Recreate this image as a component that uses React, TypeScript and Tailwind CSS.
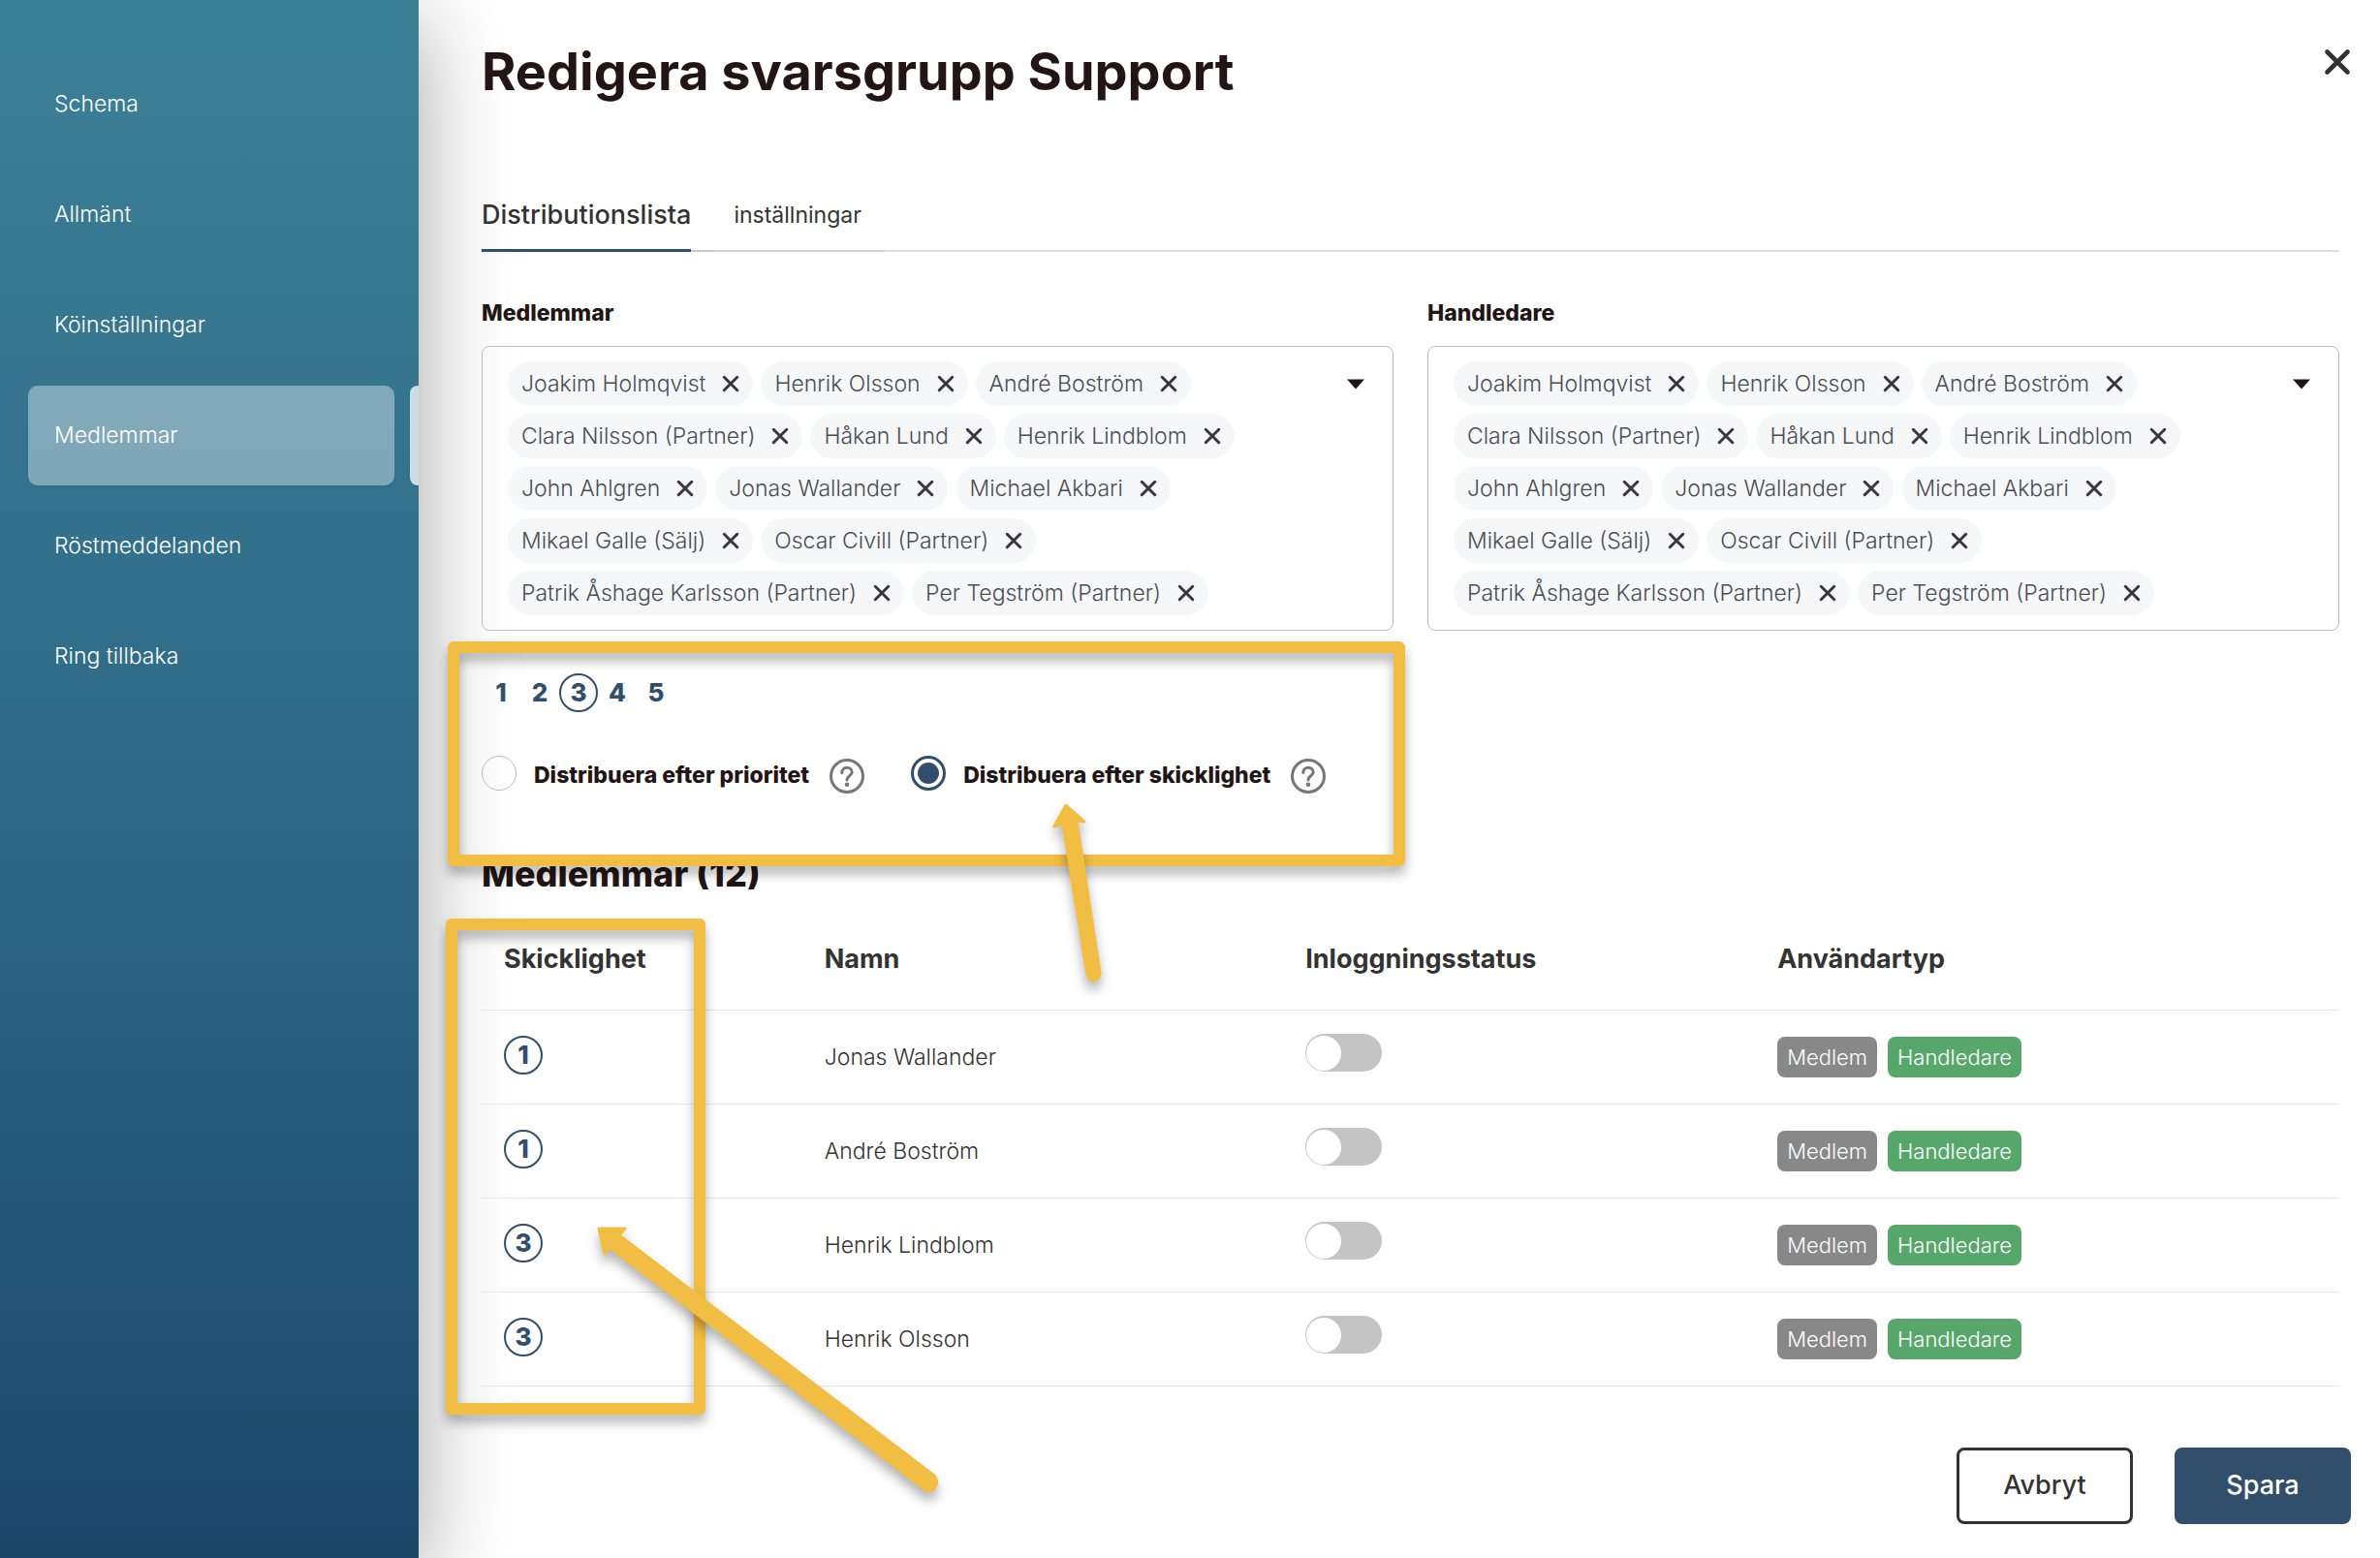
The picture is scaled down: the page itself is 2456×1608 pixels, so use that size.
import { useState } from "react";

const navItems = ["Schema", "Allmänt", "Köinställningar", "Medlemmar", "Röstmeddelanden", "Ring tillbaka"];

const people = [
  "Joakim Holmqvist",
  "Henrik Olsson",
  "André Boström",
  "Clara Nilsson (Partner)",
  "Håkan Lund",
  "Henrik Lindblom",
  "John Ahlgren",
  "Jonas Wallander",
  "Michael Akbari",
  "Mikael Galle (Sälj)",
  "Oscar Civill (Partner)",
  "Patrik Åshage Karlsson (Partner)",
  "Per Tegström (Partner)",
];

const rows = [
  { skill: 1, name: "Jonas Wallander" },
  { skill: 1, name: "André Boström" },
  { skill: 3, name: "Henrik Lindblom" },
  { skill: 3, name: "Henrik Olsson" },
];

function Cross({ className, width }: { className: string; width: number }) {
  return (
    <svg viewBox="0 0 24 24" className={className} fill="none" stroke="currentColor" strokeWidth={width} strokeLinecap="round" aria-hidden="true">
      <path d="M3 3 L21 21 M21 3 L3 21" />
    </svg>
  );
}

function Help({ label }: { label: string }) {
  return (
    <button type="button" aria-label={label} className="mt-1.5 size-9 text-[#777777]">
      <svg viewBox="0 0 36 36" className="size-9" fill="none" stroke="currentColor" strokeWidth="3" aria-hidden="true">
        <circle cx="18" cy="18" r="16.5" />
        <path d="M12.800 14.500 C12.800 7.500 23.200 7.500 23.200 14 C23.200 17.500 18 17.500 18 22" strokeLinecap="round" />
        <circle cx="18" cy="26.800" r="2.300" fill="currentColor" stroke="none" />
      </svg>
    </button>
  );
}

function PeoplePicker({ title }: { title: string }) {
  return (
    <section className="min-w-0 flex-1">
      <h3 className="text-[23px] leading-8 font-extrabold text-[#231515]">{title}</h3>
      <div className="mt-[18px] flex items-start justify-between rounded-lg border border-[#bfbfbf] py-[15px] pr-7 pl-[26px]">
        <ul className="flex max-w-[800px] flex-wrap gap-2">
          {people.map((p) => (
            <li key={p} className="flex h-[46px] items-center gap-[17px] rounded-full bg-[#f5f7f9] px-[14px] text-[23px] font-light whitespace-nowrap text-[#4a4e55]">
              {p}
              <button type="button" aria-label={`Ta bort ${p}`} className="text-[#3c3638]">
                <Cross className="size-[18px]" width={4} />
              </button>
            </li>
          ))}
        </ul>
        <button type="button" aria-label={`Öppna ${title}`} className="mt-[18px]">
          <svg viewBox="0 0 20 11" className="h-[11px] w-5" aria-hidden="true">
            <path d="M1 0.500 H19 L10 10.500 Z" fill="#231515" />
          </svg>
        </button>
      </div>
    </section>
  );
}

function Radio({ id, label, checked, onChange }: { id: string; label: string; checked: boolean; onChange: () => void }) {
  return (
    <div className="flex items-center">
      <input
        id={id}
        type="radio"
        name="distribution"
        checked={checked}
        onChange={onChange}
        className="size-9 appearance-none rounded-full border border-[#bcbcbc] bg-clip-content checked:border-[3px] checked:border-[#314f6b] checked:bg-[#314f6b] checked:p-1"
      />
      <label htmlFor={id} className="mt-1 pr-[21px] pl-[18px] text-[23px] leading-8 font-extrabold text-[#231515]">
        {label}
      </label>
      <Help label={`Hjälp: ${label}`} />
    </div>
  );
}

export default function App() {
  const [level, setLevel] = useState(3);
  const [mode, setMode] = useState("skill");
  return (
    <div className="relative flex min-h-screen overflow-hidden bg-white font-['Inter',sans-serif] text-[#333333]">
      <aside className="w-[432px] shrink-0 bg-linear-to-b from-[#3c8096] via-[#2e6a87] to-[#1c4868] pt-14 shadow-[0_24px_90px_rgba(0,0,0,0.36)]">
        <nav className="flex flex-col gap-[11px]">
          {navItems.map((n) =>
            n === "Medlemmar" ? (
              <div key={n} className="flex justify-between pl-[29px]">
                <a href="#" aria-current="page" className="flex h-[103px] w-[378px] items-center rounded-[10px] bg-white/38 pl-[27px] text-[23px] font-light text-white">
                  {n}
                </a>
                <span className="w-[9px] rounded-l-lg bg-[#cddde4]" />
              </div>
            ) : (
              <a key={n} href="#" className="flex h-[103px] items-center pl-14 text-[23px] font-light text-white">
                {n}
              </a>
            ),
          )}
        </nav>
      </aside>

      <main className="relative z-10 flex min-w-0 flex-1 flex-col pr-[30px] pb-[35px] pl-[65px]">
        <header className="flex items-start justify-between pt-[40px]">
          <h1 className="text-[54px] leading-[68px] font-bold text-[#231515]">Redigera svarsgrupp Support</h1>
          <button type="button" aria-label="Stäng" className="mt-[10px]">
            <Cross className="size-7" width={4} />
          </button>
        </header>

        <div className="pr-3">
          <div className="mt-[88px] flex h-16 border-b-2 border-[#e0e0e0]" role="tablist">
            <div className="-mb-[2px] flex border-b-2 border-[#c8c8c8] pr-[22px]">
              <button type="button" role="tab" aria-selected="true" className="-mb-[2px] border-b-[3px] border-[#314f6b] pb-2.5 text-[27px] leading-10 font-medium">
                Distributionslista
              </button>
            </div>
            <button type="button" role="tab" aria-selected="false" className="-mb-[2px] border-b-2 border-[#d2d2d2] pr-6 pb-2.5 pl-[22px] text-[23px] leading-10">
              inställningar
            </button>
          </div>

          <div className="mt-[47px] flex gap-[35px]">
            <PeoplePicker title="Medlemmar" />
            <PeoplePicker title="Handledare" />
          </div>

          <div className="mt-[44px] flex">
            {[1, 2, 3, 4, 5].map((n) => (
              <button
                key={n}
                type="button"
                aria-pressed={n === level}
                onClick={() => setLevel(n)}
                className="size-10 rounded-full border-2 border-transparent text-[26px] leading-9 font-extrabold text-[#314f6b] aria-pressed:border-[#314f6b]"
              >
                {n}
              </button>
            ))}
          </div>

          <div className="mt-[42px] flex gap-12">
            <Radio id="prio" label="Distribuera efter prioritet" checked={mode === "prio"} onChange={() => setMode("prio")} />
            <Radio id="skill" label="Distribuera efter skicklighet" checked={mode === "skill"} onChange={() => setMode("skill")} />
          </div>

          <h2 className="mt-[59px] text-4xl leading-[48px] font-extrabold text-[#231515]">Medlemmar (12)</h2>

          <table className="mt-2 w-full table-fixed border-collapse text-left">
            <thead>
              <tr className="h-[108px] border-b border-[#e8e8e8] text-[27px] leading-8">
                <th className="w-[17.2%] pt-1 pl-[23px] font-bold">Skicklighet</th>
                <th className="w-[25.9%] pt-1 pl-6 font-bold">Namn</th>
                <th className="w-[25.4%] pt-1 pl-6 font-bold">Inloggningsstatus</th>
                <th className="pt-1 pl-6 font-bold">Användartyp</th>
              </tr>
            </thead>
            <tbody>
              {rows.map((r) => (
                <tr key={r.name} className="h-[97px] border-b border-[#e8e8e8] text-[23px] font-light">
                  <td className="pb-1 pl-[23px]">
                    <span className="flex size-10 items-center justify-center rounded-full border-2 border-[#314f6b] text-[26px] font-extrabold text-[#314f6b]">{r.skill}</span>
                  </td>
                  <td className="pt-0.5 pl-6">{r.name}</td>
                  <td className="pb-2 pl-6">
                    <input
                      type="checkbox"
                      role="switch"
                      aria-label={`Inloggningsstatus ${r.name}`}
                      className="flex h-[39px] w-[79px] appearance-none items-center rounded-full bg-[#c4c4c4] px-px before:size-9 before:rounded-full before:bg-white checked:justify-end checked:bg-[#314f6b]"
                    />
                  </td>
                  <td className="pl-6">
                    <div className="flex gap-[11px] text-[22px] leading-[42px] text-white">
                      <span className="rounded-lg bg-[#888888] px-2.5">Medlem</span>
                      <span className="rounded-lg bg-[#57a76c] px-2.5">Handledare</span>
                    </div>
                  </td>
                </tr>
              ))}
            </tbody>
          </table>
        </div>

        <footer className="mt-auto flex justify-end gap-[43px] text-[27px] font-medium">
          <button type="button" className="h-[79px] w-[182px] rounded-lg border-[3px] border-[#333333] bg-white">
            Avbryt
          </button>
          <button type="button" className="h-[79px] w-[182px] rounded-lg bg-[#314f6b] text-white">
            Spara
          </button>
        </footer>
      </main>

      <div className="pointer-events-none absolute top-[662px] left-[462px] z-20 h-[232px] w-[988px] rounded-md border-12 border-[#f1bd42] drop-shadow-[0_8px_6px_rgba(0,0,0,0.3)]" />
      <div className="pointer-events-none absolute top-[948px] left-[460px] z-20 h-[512px] w-[268px] rounded-md border-12 border-[#f1bd42] drop-shadow-[0_8px_6px_rgba(0,0,0,0.3)]" />
      <svg viewBox="0 0 60 200" className="pointer-events-none absolute top-[820px] left-[1080px] z-20 h-[200px] w-[60px] overflow-visible drop-shadow-[0_8px_6px_rgba(0,0,0,0.3)]" aria-hidden="true">
        <path d="M20 11 L8 33 L17 30 L42 186 Q44 192 49 192 Q55 190 55 184 L31 27 L39 28 Z" fill="#f1bd42" stroke="#f1bd42" strokeWidth="3" strokeLinejoin="round" />
      </svg>
      <svg viewBox="0 0 370 290" className="pointer-events-none absolute top-[1260px] left-[610px] z-20 h-[290px] w-[370px] overflow-visible drop-shadow-[0_8px_6px_rgba(0,0,0,0.3)]" aria-hidden="true">
        <path d="M8 8 L14 34 L19 27 L344 277 Q350 281 355 275 Q359 268 354 263 L29 15 L35 8 Z" fill="#f1bd42" stroke="#f1bd42" strokeWidth="3" strokeLinejoin="round" />
      </svg>
    </div>
  );
}
